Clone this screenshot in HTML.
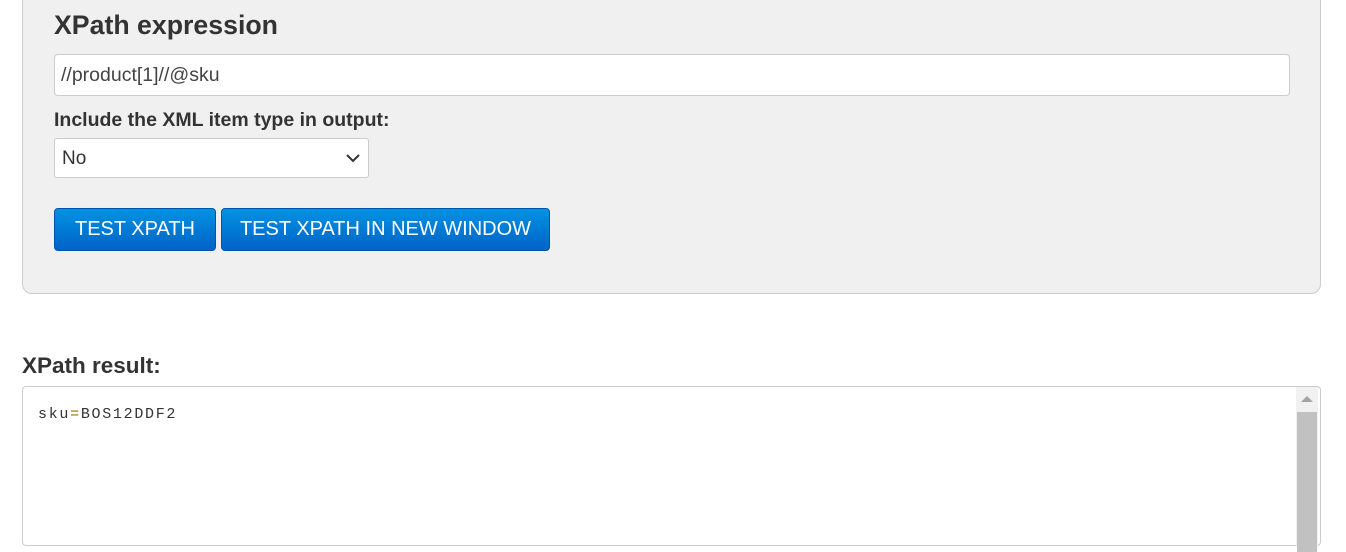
<!DOCTYPE html>
<html><head><style>
body{margin:0;background:#fff;font-family:"Liberation Sans",Arial,sans-serif;color:#333;width:1346px;height:539px;overflow:hidden;position:relative}
.panel{position:absolute;left:22px;top:-20px;width:1297px;height:312px;background:#f0f0f0;border:1px solid #ccc;border-radius:10px}
h2{position:absolute;left:54px;top:10px;margin:0;font-size:26.7px;font-weight:bold;color:#333}
.inp{position:absolute;left:54px;top:54px;width:1228px;height:40px;background:#fff;border:1px solid #ccc;border-radius:4px;box-sizing:content-box;font-size:19.5px;line-height:40px;padding-left:6px;color:#444}
.lbl{position:absolute;left:54px;top:109px;font-size:19.5px;font-weight:bold;color:#333}
.sel{position:absolute;left:54px;top:138px;width:315px;height:40px;background:#fff;border:1px solid #ccc;border-radius:3px;font-size:19px;line-height:39px;padding-left:7px;box-sizing:border-box;color:#333}
.sel svg{position:absolute;right:8px;top:15px}
.btn{position:absolute;top:208px;height:43px;border-radius:4px;background:linear-gradient(#0292e2,#0063c8);border:1px solid #0055aa;box-sizing:border-box;color:#fff;font-size:20px;line-height:41px;text-align:center}
.rl{position:absolute;left:22px;top:353px;font-size:22.5px;font-weight:bold;color:#333}
.res{position:absolute;left:22px;top:386px;width:1299px;height:160px;border:1px solid #ccc;border-radius:4px;background:#fff;box-sizing:border-box}
.res pre{margin:0;position:absolute;left:15px;top:19px;font-family:"Liberation Mono",monospace;font-size:15px;letter-spacing:1.7px;color:#333}
.sb{position:absolute;right:2px;top:0;width:22px;height:160px;background:#f1f1f1}
.th{position:absolute;left:1px;top:25px;width:20px;height:140px;background:#c1c1c1}
</style></head><body>
<div class="panel"></div>
<h2>XPath expression</h2>
<div class="inp">//product[1]//@sku</div>
<div class="lbl">Include the XML item type in output:</div>
<div class="sel">No<svg width="14" height="9" viewBox="0 0 14 9"><path d="M1 1l6 6 6-6" fill="none" stroke="#333" stroke-width="2"/></svg></div>
<div class="btn" style="left:54px;width:162px">TEST XPATH</div>
<div class="btn" style="left:221px;width:329px">TEST XPATH IN NEW WINDOW</div>
<div class="rl">XPath result:</div>
<div class="res"><pre>sku<span style="color:#8a7a00">=</span>BOS12DDF2</pre>
<div class="sb"><svg style="position:absolute;left:5px;top:9px" width="12" height="6"><path d="M0 6L6 0L12 6Z" fill="#a3a3a3"/></svg><div class="th"></div></div></div>
</body></html>
